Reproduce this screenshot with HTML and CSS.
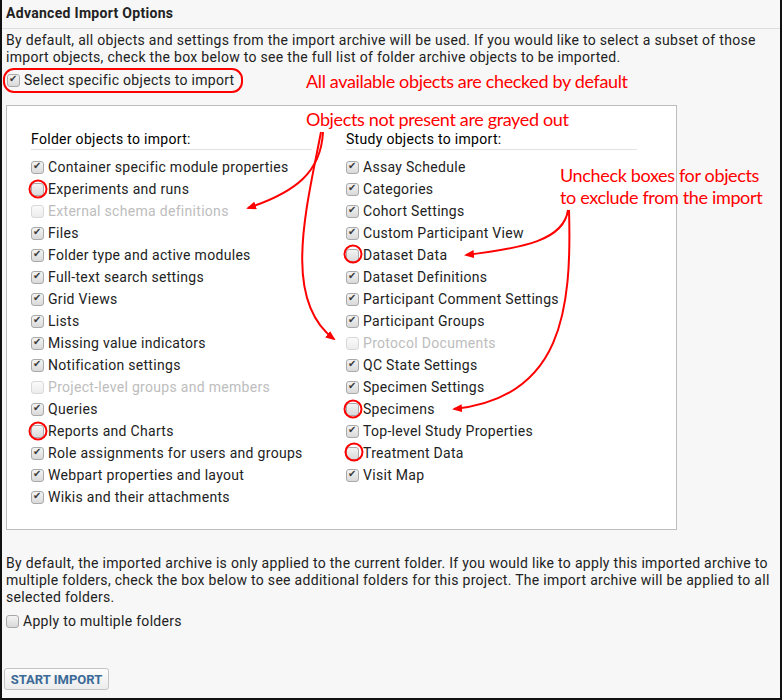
FILE: index.html
```html
<!DOCTYPE html>
<html lang="en">
<head>
    <meta charset="UTF-8">
    <title>Advanced Import Options</title>
    <link rel="stylesheet" href="styles.css">
</head>
<body>
    <div class="frame">
        <h3 class="title">Advanced Import Options</h3>
        <p class="para">By default, all objects and settings from the import archive will be used. If you would like to select a subset of those import objects, check the box below to see the full list of folder archive objects to be imported.</p>
        <label class="opt"><span class="cb on"></span>Select specific objects to import</label>

        <!-- object lists -->
        <div class="objects">
            <div class="col">
                <h4>Folder objects to import:</h4>
                <ul>
                    <li><span class="cb on"></span>Container specific module properties</li>
                    <li><span class="cb"></span>Experiments and runs</li>
                    <li class="off"><span class="cb"></span>External schema definitions</li>
                    <li><span class="cb on"></span>Files</li>
                    <li><span class="cb on"></span>Folder type and active modules</li>
                    <li><span class="cb on"></span>Full-text search settings</li>
                    <li><span class="cb on"></span>Grid Views</li>
                    <li><span class="cb on"></span>Lists</li>
                    <li><span class="cb on"></span>Missing value indicators</li>
                    <li><span class="cb on"></span>Notification settings</li>
                    <li class="off"><span class="cb"></span>Project-level groups and members</li>
                    <li><span class="cb on"></span>Queries</li>
                    <li><span class="cb"></span>Reports and Charts</li>
                    <li><span class="cb on"></span>Role assignments for users and groups</li>
                    <li><span class="cb on"></span>Webpart properties and layout</li>
                    <li><span class="cb on"></span>Wikis and their attachments</li>
                </ul>
            </div>
            <div class="col">
                <h4>Study objects to import:</h4>
                <ul>
                    <li><span class="cb on"></span>Assay Schedule</li>
                    <li><span class="cb on"></span>Categories</li>
                    <li><span class="cb on"></span>Cohort Settings</li>
                    <li><span class="cb on"></span>Custom Participant View</li>
                    <li><span class="cb"></span>Dataset Data</li>
                    <li><span class="cb on"></span>Dataset Definitions</li>
                    <li><span class="cb on"></span>Participant Comment Settings</li>
                    <li><span class="cb on"></span>Participant Groups</li>
                    <li class="off"><span class="cb"></span>Protocol Documents</li>
                    <li><span class="cb on"></span>QC State Settings</li>
                    <li><span class="cb on"></span>Specimen Settings</li>
                    <li><span class="cb"></span>Specimens</li>
                    <li><span class="cb on"></span>Top-level Study Properties</li>
                    <li><span class="cb"></span>Treatment Data</li>
                    <li><span class="cb on"></span>Visit Map</li>
                </ul>
            </div>
        </div>

        <p class="para para-bottom">By default, the imported archive is only applied to the current folder. If you would like to apply this imported archive to multiple folders, check the box below to see additional folders for this project. The import archive will be applied to all selected folders.</p>
        <label class="opt opt-apply"><span class="cb"></span>Apply to multiple folders</label>

        <button class="btn">START IMPORT</button>

        <!-- annotations -->
        <div class="note note-1">All available objects are checked by default</div>
        <div class="note note-2">Objects not present are grayed out</div>
        <div class="note note-3">Uncheck boxes for objects<br>to exclude from the import</div>
        <svg class="marks" width="782" height="700" viewBox="0 0 782 700">
            <defs>
                <marker id="head" markerWidth="10" markerHeight="8" refX="8" refY="4" orient="auto" markerUnits="userSpaceOnUse">
                    <path d="M0 0 L10 4 L0 8 Z" fill="#f00"/>
                </marker>
            </defs>
            <g fill="none" stroke="#f00" stroke-width="2">
                <rect x="2" y="69" width="238" height="23" rx="10"/>
                <circle cx="36" cy="189" r="8.5"/>
                <circle cx="36" cy="431" r="8.5"/>
                <circle cx="351" cy="254" r="8.5"/>
                <circle cx="351" cy="409" r="8.5"/>
                <circle cx="352" cy="452" r="8.5"/>
                <path d="M321 132 C319 172 294 192 246 208" marker-end="url(#head)"/>
                <path d="M319 132 C304 210 280 300 332 339" marker-end="url(#head)"/>
                <path d="M566 210 C562 240 522 248 464 255" marker-end="url(#head)"/>
                <path d="M567 210 C570 310 560 398 452 409" marker-end="url(#head)"/>
            </g>
        </svg>
    </div>
</body>
</html>
```

FILE: styles.css
```css
*{
    padding: 0;
    margin: 0;
    list-style: none;
    box-sizing: border-box;
}
body{
    font-family: Roboto, "Liberation Sans", sans-serif;
    font-size: 14px;
    letter-spacing: 0.3px;
    color: #222;
}

.frame{
    position: relative;
    width: 782px;
    height: 700px;
    background: #f7f7f7;
    border: 2px solid #111;
    border-top: 0;
    padding: 0 4px;
}
.title{
    font-size: 14px;
    font-weight: bold;
    line-height: 17px;
    padding: 5px 4px 6px;
    margin: 0 -4px;
    border-bottom: 1px solid #dedede;
}
.para{
    line-height: 17px;
    margin-top: 3px;
}
.opt{
    display: flex;
    align-items: center;
    height: 22px;
    margin-top: 3px;
    padding-left: 1px;
}
.opt .cb{
    margin-right: 4px;
}

/* checkbox */
.cb{
    display: inline-block;
    position: relative;
    width: 13px;
    height: 13px;
    border: 1px solid #a9a9a9;
    border-radius: 3px;
    background: linear-gradient(#f4f4f4, #d9d9d9);
    flex: none;
}
.cb.on::after{
    content: "\2714";
    position: absolute;
    left: 1px;
    top: -2px;
    font-family: "DejaVu Sans", sans-serif;
    font-size: 10px;
    letter-spacing: 0;
    color: #3a3a3a;
}

.objects{
    display: grid;
    grid-template-columns: 281px 291px;
    column-gap: 34px;
    width: 671px;
    height: 425px;
    margin-top: 14px;
    padding: 25px 0 0 24px;
    background: #fff;
    border: 1px solid #bdbdbd;
}
.col h4{
    font-size: 14px;
    font-weight: normal;
    line-height: 17px;
    color: #000;
    padding-bottom: 1px;
    border-bottom: 1px solid #e2e2e2;
    margin-bottom: 6px;
}
.col li{
    display: flex;
    align-items: center;
    height: 22px;
    color: #222;
}
.col li .cb{
    margin-right: 4px;
}
.col li.off{
    color: #bdbdbd;
}
.col li.off .cb{
    border-color: #d8d8d8;
    background: linear-gradient(#fafafa, #ececec);
}

.para-bottom{
    margin-top: 25px;
}
.opt-apply{
    margin-top: 4px;
    padding-left: 0;
}

.btn{
    display: block;
    margin: 36px 0 0 -2px;
    width: 105px;
    height: 22px;
    font-family: Roboto, "Liberation Sans", sans-serif;
    font-size: 13px;
    font-weight: bold;
    letter-spacing: 0;
    color: #3b6a97;
    background: linear-gradient(#fdfdfd, #ececec);
    border: 1px solid #c4c4c4;
    border-radius: 3px;
}

/* annotations over the page */
.note{
    position: absolute;
    font-family: Lato, "Liberation Sans", sans-serif;
    font-size: 18px;
    line-height: 22px;
    letter-spacing: -0.35px;
    white-space: nowrap;
    color: #f00;
}
.note-1{
    left: 304px;
    top: 70px;
}
.note-2{
    left: 304px;
    top: 108px;
}
.note-3{
    left: 558px;
    top: 164px;
}
.marks{
    position: absolute;
    top: 0;
    left: 0;
    pointer-events: none;
}
```
